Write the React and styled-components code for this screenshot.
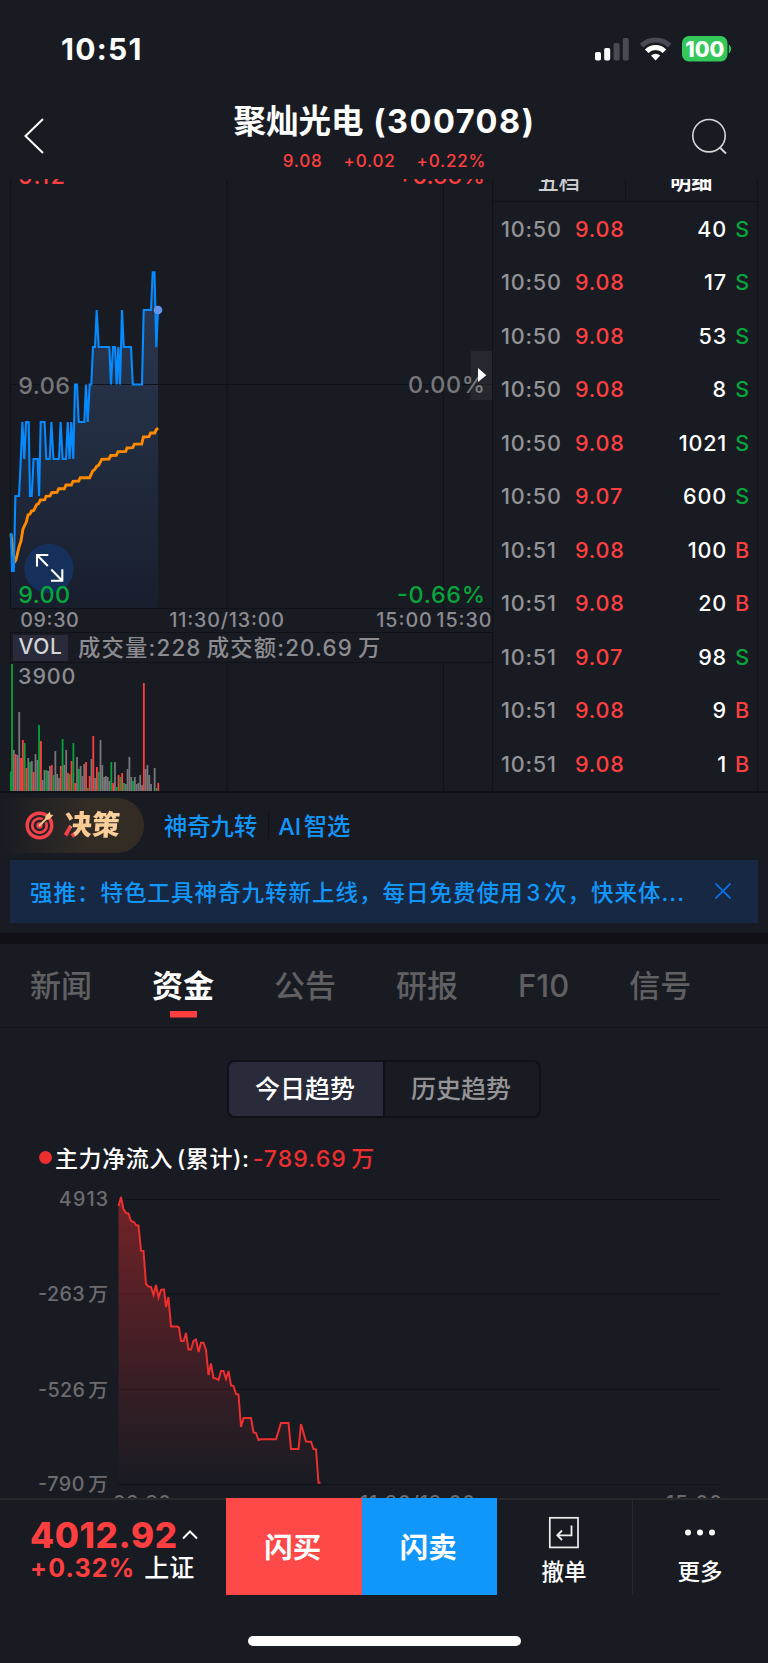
import React from "react";
import styled, { createGlobalStyle } from "styled-components";

const RED = "#ff3f3f";
const GREEN = "#05a63b";
const BLUE = "#1197fb";
const LINE = "#101219";

const trades = [
  { time: "10:50", price: "9.08", volume: 40, side: "S" },
  { time: "10:50", price: "9.08", volume: 17, side: "S" },
  { time: "10:50", price: "9.08", volume: 53, side: "S" },
  { time: "10:50", price: "9.08", volume: 8, side: "S" },
  { time: "10:50", price: "9.08", volume: 1021, side: "S" },
  { time: "10:50", price: "9.07", volume: 600, side: "S" },
  { time: "10:51", price: "9.08", volume: 100, side: "B" },
  { time: "10:51", price: "9.08", volume: 20, side: "B" },
  { time: "10:51", price: "9.07", volume: 98, side: "S" },
  { time: "10:51", price: "9.08", volume: 9, side: "B" },
  { time: "10:51", price: "9.08", volume: 1, side: "B" },
];

const tabs = ["新闻", "资金", "公告", "研报", "F10", "信号"];

const priceLine =
  "11,533 12,571 13.8,571 15.4,496 19,496 20.4,468 22.4,422 24.3,459 26,422 28.7,422 30,496 31.7,496 33.6,459 37.6,459 39.1,496 40.7,422 44.6,422 46.3,459 49.7,459 51.4,422 53.4,459 59,459 60.6,422 62.6,459 66,459 67.7,422 69.6,459 71.3,422 73.3,459 75,384.5 77,384.5 78.7,422 84.3,422 86,384.5 87.7,422 89.7,384.5 91.3,384.5 93,347 95,347 96.7,310 98.7,347 109.3,347 111,384.5 113,347 115,347 116.7,384.5 118.3,347 120,384.5 122,310 123.8,347 131,347 132.8,384.5 142,384.5 143.7,310 151,310 152.7,272.3 154.5,272.3 156.3,347 158,310";

const averageLine =
  "11,534 12.5,548 14.5,562 16,560 19,547 21,541 23,529 26.3,522 28,515 30,514 31.5,511 33.7,510.5 36.7,504.5 38.7,503.5 40.3,500 44.7,499.7 46,496.4 50,496 51.7,492.7 57,492.3 58.7,488.8 64.3,488.7 66,485 71.3,485 73,481.4 78.7,481 80.3,477.7 89.7,477.7 92.7,471 94.7,469.6 96.7,466.4 98.7,465.3 101.7,459.3 109,459 110.7,455.5 116.3,455.3 118,451.7 125.7,451.4 127,448 132.7,447.7 134.4,444.1 141.7,444 143.4,437 149,436.7 150.7,433 154.7,433 156.3,429.7 158,428";

const fundLine =
  "118.5,1206 121,1197 123.4,1209 126,1213 128.5,1213.5 131,1221 134,1222 136,1225 138.5,1225.5 141,1250.7 143.5,1251 146,1284 148.5,1286.5 151,1287 153.5,1295 156,1285 158.5,1297.5 161,1290 164,1289.5 166,1307 168.4,1297 171,1326.5 177,1326.5 179,1327.5 181,1341 183.7,1341 186,1333 188.5,1349.5 191,1349.5 193.5,1341 196,1339.5 198.6,1352 201,1342.7 203.5,1342.7 206,1350 208.5,1375 211,1363.5 213.4,1378 216,1378.5 218.5,1380 221,1371 223.5,1371 226,1379 228.5,1371 231,1385.5 233.5,1386 236,1394 238.5,1394.5 241,1427 243.5,1418 251,1418 253.5,1432.5 256,1433 258.5,1440 261,1439.3 276,1439.3 281,1423 288.5,1423 291,1449 298.5,1449 301,1424 306,1441.5 311,1441.7 313.5,1449 316,1449.3 318.5,1482.7 320.5,1482.7";

// one entry per minute: colour key + bar height
const volumeBars =
  "g127 n41 r37 n36 n79 r33 r51 g48 r23 n33 g29 n30 r19 n37 n31 g66 r50 n11 n21 g21 n20 n25 r26 g16 n40 n17 n13 r25 g52 n26 n41 r18 g17 r30 g48 r8 n34 g22 n25 n15 n27 r29 g3 r15 n32 r55 n13 r24 g19 n51 n26 n14 n15 n14 n10 g29 r8 n29 g4 r16 g14 r18 g8 n7 n22 n34 n14 g10 n14 n7 n8 n16 n6 r108 n22 n26 n16 n7 n0 n23 g3 r8"
    .split(" ")
    .map((bar) => ({ color: bar[0], height: Number(bar.slice(1)) }));

const barColors = { g: "#08a33a", r: "#ff3f3f", n: "#77777a" };

function StatusIcons() {
  return (
    <svg width="140" height="30" viewBox="593 34 140 30">
      <rect x="595" y="52" width="6" height="8.5" rx="1.8" fill="#fff" />
      <rect x="604.2" y="48" width="6" height="12.5" rx="1.8" fill="#fff" />
      <rect x="613.6" y="43" width="6" height="17.5" rx="1.8" fill="#4a4a53" />
      <rect x="622.8" y="38" width="6" height="22.5" rx="1.8" fill="#4a4a53" />
      <g fill="none" strokeWidth="5">
        <path d="M641.6 45.6a20 20 0 0 1 28 0" stroke="#4a4a53" />
        <path d="M646.7 51.2a12.7 12.7 0 0 1 17.8 0" stroke="#fff" />
      </g>
      <path d="M651 55.5a6.6 6.6 0 0 1 9.2 0L655.6 60.5Z" fill="#fff" />
      <rect x="682" y="36" width="45.5" height="25.5" rx="7" fill="#34c759" />
      <path d="M729.3 45.2q3 3.3 0 7.6Z" fill="#34c759" stroke="#34c759" />
      <text
        x="704.8"
        y="56.7"
        fill="#fff"
        fontSize="21.5"
        fontWeight="800"
        textAnchor="middle"
      >
        100
      </text>
    </svg>
  );
}

function PriceChart() {
  return (
    <ChartSvg width="492" height="453" viewBox="0 179 492 453">
      <defs>
        <linearGradient id="priceFill" x1="0" y1="0" x2="0" y2="1">
          <stop offset="0" stopColor="#2b3850" />
          <stop offset="0.5" stopColor="#222d41" />
          <stop offset="1" stopColor="#191e2d" />
        </linearGradient>
      </defs>
      <polygon points={`${priceLine} 158,608 10,608`} fill="url(#priceFill)" />
      <path
        d="M10.5 179V608M227 179V608M443.5 179V608M10 384.5H492M10 608.5H492"
        stroke={LINE}
        fill="none"
      />
      <text x="18.3" y="393.7" fill="#77777a" textLength="51.7">9.06</text>
      <text x="408" y="393.3" fill="#77777a" textLength="77">0.00%</text>
      <circle cx="49" cy="568.5" r="24.7" fill="#15305a" />
      <polyline points={averageLine} stroke="#ff8a00" strokeWidth="2.9" fill="none" />
      <polyline points={priceLine} stroke="#058aff" strokeWidth="2.1" fill="none" />
      <circle cx="158" cy="310" r="4.3" fill="#6795ee" />
      <path
        d="M48.3 555H37V566.5M37.3 555.3L47.8 566M51 580.7H62.3V569.3M62 580.4L51.3 569.6"
        stroke="#fff"
        strokeWidth="2.1"
        fill="none"
      />
      <text x="18.3" y="184.2" fill={RED} textLength="46.5">9.12</text>
      <text x="397" y="184.2" fill={RED} textLength="88">+0.66%</text>
      <text x="18.3" y="602.7" fill={GREEN} textLength="51.7">9.00</text>
      <text x="397" y="602.7" fill={GREEN} textLength="88">-0.66%</text>
      <g fill="#8c8c90" fontSize="19.7">
        <text x="20.3" y="627.3" textLength="58.5">09:30</text>
        <text x="169.2" y="627.3" textLength="114.8">11:30/13:00</text>
        <text x="376.2" y="627.3" textLength="55.6">15:00</text>
        <text x="436.3" y="627.3" textLength="55.2">15:30</text>
      </g>
      <rect x="470.5" y="351" width="21.5" height="49" fill="#fff" fillOpacity="0.06" />
      <path d="M478 368L486.3 375.2L478 382Z" fill="#fff" />
    </ChartSvg>
  );
}

function VolumeChart() {
  return (
    <ChartSvg width="492" height="128" viewBox="0 663 492 128">
      <path d="M10.5 663V791M227 663V791M443.5 663V791" stroke={LINE} />
      <rect x="10" y="771.5" width="1.5" height="19.5" fill={barColors.g} />
      {volumeBars.map((bar, i) => (
        <rect
          key={i}
          x={11.1 + i * 1.806}
          y={791 - bar.height}
          width="1.8"
          height={bar.height}
          fill={barColors[bar.color]}
        />
      ))}
      <text x="18" y="684.3" fill="#8c8c90" fontSize="21.5" textLength="57.5">
        3900
      </text>
    </ChartSvg>
  );
}

function FundChart() {
  return (
    <ChartSvg width="768" height="318" viewBox="0 1180 768 318">
      <defs>
        <linearGradient id="fundFill" x1="0" y1="0" x2="0" y2="1">
          <stop offset="0" stopColor="#ee2e2e" stopOpacity="0.42" />
          <stop offset="1" stopColor="#ee2e2e" stopOpacity="0" />
        </linearGradient>
      </defs>
      <path
        d="M118 1199.5H720M118 1294H720M118 1389.3H720M118 1484.3H720"
        stroke={LINE}
        fill="none"
      />
      <polygon points={`${fundLine} 320.5,1484 118.5,1484`} fill="url(#fundFill)" />
      <polyline points={fundLine} stroke="#ec2f2f" strokeWidth="2" fill="none" />
      <g fill="#6c6c6f" fontSize="19.7" wordSpacing="-2.5">
        <text x="58.8" y="1206" textLength="49.4">4913</text>
        <text x="38" y="1301.3" textLength="70">-263 万</text>
        <text x="38" y="1396.5" textLength="70">-526 万</text>
        <text x="38" y="1491.3" textLength="70">-790 万</text>
        <text x="113" y="1510.2" textLength="58">09:30</text>
        <text x="360" y="1510.2" textLength="115">11:30/13:00</text>
        <text x="666" y="1510.2" textLength="56">15:00</text>
      </g>
    </ChartSvg>
  );
}

function TargetIcon() {
  return (
    <svg width="30" height="30" viewBox="0 0 30 30" fill="none">
      <circle cx="14.5" cy="15.5" r="12.3" stroke="#f4424c" strokeWidth="3.4" />
      <circle cx="14.5" cy="15.5" r="7.2" stroke="#f4424c" strokeWidth="2.8" />
      <circle cx="14.5" cy="15.5" r="3.2" fill="#f4424c" />
      <path d="M17 13L24 6" stroke="#252321" strokeWidth="4.5" />
      <path d="M14 16L22 8" stroke="#f6c98f" strokeWidth="2" />
      <path d="M20 10L20.5 6L25 1.8L25.5 4.8L28.5 5L24 9.6Z" fill="#f6c98f" />
    </svg>
  );
}

function App() {
  return (
    <Page>
      <GlobalStyle />
      <StatusBar>
        <Clock>10:51</Clock>
        <StatusIcons />
      </StatusBar>

      <NavBar>
        <svg width="40" height="40" viewBox="14 116 40 40" fill="none">
          <path d="M43 119L25.5 136L43 153" stroke="#fff" strokeWidth="2" />
        </svg>
        <Heading>
          <Title>
            聚灿光电 <Code>(300708)</Code>
          </Title>
          <Quote>
            <span>9.08</span>
            <span>+0.02</span>
            <span>+0.22%</span>
          </Quote>
        </Heading>
        <svg width="40" height="40" viewBox="688 116 40 40" fill="none">
          <circle cx="709" cy="135.7" r="16.2" stroke="#d8d8da" strokeWidth="1.6" />
          <path d="M719.8 147.5L726 153.5" stroke="#d8d8da" strokeWidth="1.8" />
        </svg>
      </NavBar>

      <Market>
        <ChartColumn>
          <PriceChart />
          <VolumeInfo>
            <Badge>VOL</Badge>
            <VolumeText>成交量:228 成交额:20.69 万</VolumeText>
          </VolumeInfo>
          <VolumeChart />
        </ChartColumn>
        <TradePanel>
          <TradeTabs>
            <TradeTab>五档</TradeTab>
            <TradeTab $active>明细</TradeTab>
          </TradeTabs>
          {trades.map((trade, i) => (
            <TradeRow key={i}>
              <Time>{trade.time}</Time>
              <Price>{trade.price}</Price>
              <Volume>{trade.volume}</Volume>
              <Side $buy={trade.side === "B"}>{trade.side}</Side>
            </TradeRow>
          ))}
        </TradePanel>
      </Market>

      <Decision>
        <DecisionPill>
          <TargetIcon />
          <DecisionName>决策</DecisionName>
        </DecisionPill>
        <ToolLink>神奇九转</ToolLink>
        <ToolDivider />
        <ToolLink>AI 智选</ToolLink>
      </Decision>

      <Banner>
        <BannerText>
          强推：特色工具神奇九转新上线，每日免费使用 3 次，快来体...
        </BannerText>
        <svg width="16" height="16" viewBox="0 0 16 16">
          <path d="M0.5 0.5L15.5 15.5M15.5 0.5L0.5 15.5" stroke="#0a74ee" strokeWidth="1.6" />
        </svg>
      </Banner>

      <TabBar>
        {tabs.map((tab) => (
          <Tab key={tab} $active={tab === "资金"}>
            {tab}
          </Tab>
        ))}
      </TabBar>

      <FundPanel>
        <Segment>
          <SegmentItem $active>今日趋势</SegmentItem>
          <SegmentItem>历史趋势</SegmentItem>
        </Segment>
        <Legend>
          <Dot />
          <LegendName>主力净流入 (累计):</LegendName>
          <LegendValue>-789.69 万</LegendValue>
        </Legend>
        <FundChart />
      </FundPanel>

      <BottomBar>
        <IndexBlock>
          <IndexRow>
            <IndexValue>4012.92</IndexValue>
            <svg width="16" height="10" viewBox="0 0 16 10" fill="none">
              <path d="M1 8.5L8 1.5L15 8.5" stroke="#fff" strokeWidth="2" />
            </svg>
          </IndexRow>
          <IndexRow>
            <IndexChange>+0.32%</IndexChange>
            <IndexName>上证</IndexName>
          </IndexRow>
        </IndexBlock>
        <TradeButton $color="#ff4848">闪买</TradeButton>
        <TradeButton $color="#1197fb">闪卖</TradeButton>
        <ActionButton>
          <svg width="32" height="33" viewBox="548.5 1516 32 33" fill="none">
            <rect x="550.3" y="1517.8" width="28.2" height="29.6" stroke="#eee" strokeWidth="1.7" />
            <path
              d="M572 1525.5V1535.3H558.5M562.5 1530.5L557.8 1535.3L562.5 1540"
              stroke="#eee"
              strokeWidth="1.8"
            />
          </svg>
          <span>撤单</span>
        </ActionButton>
        <ActionButton $divided>
          <svg width="32" height="33" viewBox="683.5 1516 32 33" fill="#fff">
            <circle cx="687.5" cy="1532.5" r="3" />
            <circle cx="699.5" cy="1532.5" r="3" />
            <circle cx="711.5" cy="1532.5" r="3" />
          </svg>
          <span>更多</span>
        </ActionButton>
      </BottomBar>
      <HomeIndicator />
    </Page>
  );
}

export default App;

const GlobalStyle = createGlobalStyle`
  * {
    box-sizing: border-box;
  }
  body {
    margin: 0;
    background-color: #191b23;
    font-family: Inter, "Noto Sans CJK SC", sans-serif;
    font-weight: 500;
  }
  svg {
    display: block;
    flex-shrink: 0;
  }
`;

const Page = styled.div`
  display: flex;
  flex-direction: column;
  width: 768px;
  height: 1663px;
  overflow: hidden;
  background-color: #191b23;
  color: #fff;
  white-space: nowrap;
`;

const StatusBar = styled.div`
  display: flex;
  justify-content: space-between;
  height: 98px;
  padding: 34px 35px 0 61px;
`;

const Clock = styled.div`
  font-size: 30px;
  line-height: 31px;
  font-weight: 700;
  letter-spacing: 1.3px;
`;

const NavBar = styled.div`
  display: flex;
  justify-content: space-between;
  align-items: flex-start;
  height: 81px;
  padding: 18px 40px 0 14px;
`;

const Heading = styled.div`
  display: flex;
  flex-direction: column;
  align-items: center;
  margin-top: -18px;
  padding-left: 27px;
`;

const Title = styled.h1`
  margin: 0;
  padding-top: 4px;
  font-size: 32.5px;
  line-height: 40px;
  font-weight: 700;
`;

const Code = styled.span`
  margin-left: 2px;
  letter-spacing: 1.5px;
`;

const Quote = styled.div`
  display: flex;
  gap: 21px;
  padding-top: 8px;
  color: ${RED};
  font-size: 17px;
  line-height: 22px;
  letter-spacing: 0.8px;
`;

const Market = styled.div`
  display: flex;
  height: 614px;
  overflow: hidden;
  border-bottom: 2px solid ${LINE};
`;

const ChartColumn = styled.div`
  width: 492px;
`;

const ChartSvg = styled.svg`
  font-size: 23.4px;
`;

const VolumeInfo = styled.div`
  display: flex;
  align-items: center;
  height: 31px;
  margin-left: 10px;
  border: solid ${LINE};
  border-width: 1px 0 1px 1px;
`;

const Badge = styled.div`
  width: 55px;
  height: 26px;
  margin-left: 2px;
  background-color: #292a3a;
  color: #d5d5d8;
  font-size: 21px;
  line-height: 24px;
  letter-spacing: 0.6px;
  text-align: center;
`;

const VolumeText = styled.div`
  margin-left: 10px;
  color: #8c8c90;
  font-size: 22.3px;
  line-height: 29px;
  letter-spacing: 1.2px;
  word-spacing: -2px;
`;

const TradePanel = styled.div`
  width: 266px;
  border: solid ${LINE};
  border-width: 0 1px;
`;

const TradeTabs = styled.div`
  display: flex;
  height: 23px;
  border-bottom: 1px solid ${LINE};
`;

const TradeTab = styled.div`
  flex: 1;
  color: ${(props) => (props.$active ? "#fff" : "#cfcfd2")};
  font-size: 21px;
  font-weight: ${(props) => (props.$active ? 700 : 500)};
  line-height: 6px;
  text-align: center;

  & + & {
    border-left: 1px solid ${LINE};
  }
`;

const TradeRow = styled.div`
  display: flex;
  align-items: center;
  height: 53.5px;
  padding: 0 7px 0 8px;
  font-size: 21.6px;
  letter-spacing: 0.8px;
`;

const Time = styled.span`
  width: 74px;
  color: #939396;
`;

const Price = styled.span`
  width: 60px;
  color: ${RED};
`;

const Volume = styled.span`
  flex: 1;
  text-align: right;
`;

const Side = styled.span`
  width: 23px;
  color: ${(props) => (props.$buy ? RED : GREEN)};
  text-align: right;
`;

const Decision = styled.div`
  display: flex;
  align-items: center;
  height: 67px;
  padding-bottom: 3px;
`;

const DecisionPill = styled.div`
  display: flex;
  align-items: center;
  gap: 9px;
  width: 144px;
  height: 55px;
  padding-left: 25px;
  border-radius: 0 28px 28px 0;
  background: linear-gradient(90deg, #191b23, #322c25 60%);
`;

const DecisionName = styled.span`
  background: linear-gradient(62deg, #f4424c 19%, #f9c890 20%, #fbd3a2);
  background-clip: text;
  color: transparent;
  font-size: 28px;
  font-weight: 900;
  line-height: 32px;
  transform: skewX(-4deg);
`;

const ToolLink = styled.span`
  margin-left: 20px;
  color: ${BLUE};
  font-size: 23.3px;
  word-spacing: -3.5px;

  & + & {
    margin-left: 10px;
  }
`;

const ToolDivider = styled.i`
  width: 1px;
  height: 28px;
  margin: 0 -11px 0 11px;
  background-color: ${LINE};
`;

const Banner = styled.div`
  display: flex;
  justify-content: space-between;
  align-items: center;
  height: 62.5px;
  margin: 0 10px 10px;
  padding: 0 27px 1px 20px;
  background-color: #162842;
`;

const BannerText = styled.span`
  color: ${BLUE};
  font-size: 22.5px;
  letter-spacing: 1px;
  word-spacing: -4.3px;
`;

const TabBar = styled.div`
  display: flex;
  gap: 60px;
  height: 95px;
  padding-left: 30px;
  border-top: 11.5px solid #111016;
  border-bottom: 1px solid ${LINE};
`;

const Tab = styled.div`
  display: flex;
  flex-direction: column;
  align-items: center;
  height: 74px;
  padding-top: 8px;
  color: ${(props) => (props.$active ? "#fff" : "#606062")};
  font-size: 31px;
  font-weight: ${(props) => (props.$active ? 700 : 500)};
  line-height: 67px;
  background: ${(props) =>
    props.$active
      ? `linear-gradient(${RED}, ${RED}) center bottom / 27px 6.5px no-repeat`
      : "none"};
`;

const FundPanel = styled.div`
  flex: 1;
  min-height: 0;
  padding-top: 32px;
  overflow: hidden;
`;

const Segment = styled.div`
  display: flex;
  width: 314px;
  height: 58px;
  margin: 0 auto;
  border: 2px solid #101118;
  border-radius: 8px;
  overflow: hidden;
`;

const SegmentItem = styled.div`
  flex: 1;
  padding-right: 2px;
  background-color: ${(props) => (props.$active ? "#292a3a" : "transparent")};
  color: ${(props) => (props.$active ? "#fff" : "#949496")};
  font-size: 25px;
  line-height: 54px;
  text-align: center;

  & + & {
    border-left: 2px solid #101118;
  }
`;

const Legend = styled.div`
  display: flex;
  align-items: center;
  height: 62px;
  padding: 17px 0 0 39px;
  font-size: 23px;
  letter-spacing: 0.4px;
  word-spacing: -3px;
`;

const Dot = styled.i`
  width: 13px;
  height: 13px;
  border-radius: 50%;
  background-color: #ec2f2f;
`;

const LegendName = styled.span`
  margin-left: 3px;
  letter-spacing: 0.6px;
`;

const LegendValue = styled.span`
  margin-left: 3px;
  color: #ec2f2f;
  letter-spacing: 1.1px;
`;

const BottomBar = styled.div`
  display: flex;
  height: 97px;
  box-shadow: inset 0 2px #29292b;
`;

const IndexBlock = styled.div`
  width: 226px;
  padding: 20.5px 0 0 30px;
`;

const IndexRow = styled.div`
  display: flex;
  align-items: center;
  gap: 4px;
  height: 33px;
  line-height: 33px;
`;

const IndexValue = styled.span`
  color: ${RED};
  font-size: 35px;
  font-weight: 800;
  letter-spacing: 0.6px;
`;

const IndexChange = styled.span`
  color: ${RED};
  font-size: 25px;
  font-weight: 700;
  letter-spacing: 1.2px;
`;

const IndexName = styled.span`
  margin-left: 5px;
  font-size: 25px;
`;

const TradeButton = styled.button`
  width: 135.5px;
  height: 97px;
  padding: 0 2px 2px 0;
  border: none;
  background-color: ${(props) => props.$color};
  color: #fff;
  font-family: inherit;
  font-size: 28.5px;
  font-weight: 700;
`;

const ActionButton = styled.div`
  display: flex;
  flex-direction: column;
  align-items: center;
  flex: 1;
  padding: 18px 1px 0 0;
  border-left: ${(props) => (props.$divided ? "1px solid #29292b" : "none")};
  font-size: 22.5px;
  line-height: 45px;
`;

const HomeIndicator = styled.div`
  width: 273px;
  height: 10px;
  margin: 41px auto 17px;
  border-radius: 5px;
  background-color: #fff;
`;
